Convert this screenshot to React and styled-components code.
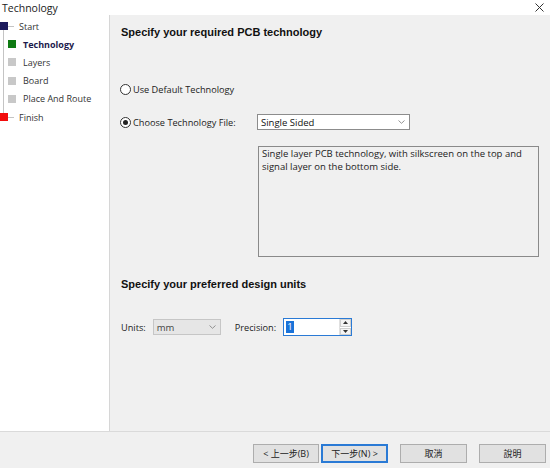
import styled, { createGlobalStyle } from "styled-components";

const GlobalStyle = createGlobalStyle`
  html, body {
    margin: 0;
    padding: 0;
    background: #ffffff;
  }
  body {
    font-family: "Open Sans", "Noto Sans", "Noto Sans CJK TC", sans-serif;
    color: #1a1a1a;
  }
`;

const steps = [
  { label: "Start", color: "#1c1a5c", level: 0, tick: true },
  { label: "Technology", color: "#0e7a12", level: 1, active: true },
  { label: "Layers", color: "#c8c8c8", level: 1 },
  { label: "Board", color: "#c8c8c8", level: 1 },
  { label: "Place And Route", color: "#c8c8c8", level: 1 },
  { label: "Finish", color: "#f20c0c", level: 0, tick: true },
];

const Window = styled.div`
  width: 550px;
  height: 468px;
  display: flex;
  flex-direction: column;
  overflow: hidden;
  background: #f0f0f0;
`;

const TitleBar = styled.div`
  height: 15px;
  flex: none;
  background: #ffffff;
  display: flex;
  align-items: center;
  justify-content: space-between;
  padding: 0 6px 0 2px;
  font-size: 10.5px;
  color: #222;
`;

const Body = styled.div`
  flex: 1;
  display: flex;
  min-height: 0;
`;

const Sidebar = styled.div`
  width: 109px;
  flex: none;
  background: #ffffff;
  border-right: 1px solid #d6d6d6;
  padding-top: 2px;
`;

const Tree = styled.ul`
  position: relative;
  list-style: none;
  margin: 0;
  padding: 0;

  &::before {
    content: "";
    position: absolute;
    left: 3px;
    top: 12px;
    height: 92px;
    border-left: 1px solid #c4c4c4;
  }
`;

const Step = styled.li`
  position: relative;
  height: 18.2px;
  display: flex;
  align-items: center;
  padding-left: ${({ $level }) => ($level ? 8 : 0)}px;
  font-size: 9px;
  font-weight: ${({ $active }) => ($active ? 700 : 400)};
  color: ${({ $active }) => ($active ? "#1c1a4c" : "#333")};
`;

const Box = styled.span`
  width: 8px;
  height: 8px;
  flex: none;
  margin-right: ${({ $gap }) => $gap}px;
  background: ${({ $color }) => $color};
`;

const Tick = styled.span`
  width: 6px;
  height: 1px;
  margin-right: 5px;
  flex: none;
  background: #c4c4c4;
`;

const Main = styled.div`
  flex: 1;
  padding: 10px 0 0 11px;
  display: flex;
  flex-direction: column;
`;

const Heading = styled.div`
  font-family: "Liberation Sans", Arial, sans-serif;
  font-weight: 700;
  font-size: 11px;
  color: #111;
  height: 14px;
  line-height: 14px;
  margin-top: ${({ $top }) => $top}px;
`;

const Row = styled.div`
  display: flex;
  align-items: center;
  height: 16px;
  margin-top: ${({ $top }) => $top}px;
  font-size: 9.2px;
  color: #222;
`;

const RadioLabel = styled.label`
  display: flex;
  align-items: center;
  gap: 2px;
  width: 137px;
  margin-left: -1px;
`;

const RadioDot = styled.span`
  width: 9px;
  height: 9px;
  border-radius: 50%;
  border: 1px solid #333;
  background: #fff;
  display: flex;
  align-items: center;
  justify-content: center;

  &::after {
    content: "";
    width: 5px;
    height: 5px;
    border-radius: 50%;
    background: ${({ $checked }) => ($checked ? "#222" : "transparent")};
  }
`;

const Select = styled.div`
  width: ${({ $w }) => $w}px;
  height: 16px;
  box-sizing: border-box;
  border: 1px solid ${({ $disabled }) => ($disabled ? "#c6c6c6" : "#8c8c8c")};
  background: ${({ $disabled }) => ($disabled ? "#e6e6e6" : "#ffffff")};
  color: ${({ $disabled }) => ($disabled ? "#444" : "#111")};
  display: flex;
  align-items: center;
  justify-content: space-between;
  padding: 0 4px 0 3px;
  font-size: 9.5px;
`;

const Chevron = () => (
  <svg width="7" height="4" viewBox="0 0 7 4">
    <path d="M0.5 0.5 L3.5 3.3 L6.5 0.5" fill="none" stroke="#888" strokeWidth="0.9" />
  </svg>
);

const Description = styled.div`
  margin: 16px 0 0 137px;
  width: 281px;
  height: 111px;
  box-sizing: border-box;
  border: 1px solid #8a8a8a;
  padding: 1px 3px;
  font-size: 9.5px;
  line-height: 12.5px;
  color: #222;
`;

const Label = styled.span`
  margin-left: ${({ $left }) => $left || 0}px;
  margin-right: ${({ $gap }) => $gap}px;
`;

const Spin = styled.div`
  width: 69px;
  height: 18px;
  box-sizing: border-box;
  border: 1px solid #2a7ad5;
  background: #fff;
  display: flex;
  align-items: stretch;
`;

const SpinText = styled.div`
  flex: 1;
  display: flex;
  align-items: center;
  padding-left: 2px;

  span {
    background: #1a73d9;
    color: #fff;
    font-size: 9.5px;
    line-height: 12px;
    padding: 0 1px;
  }
`;

const SpinButtons = styled.div`
  width: 11px;
  display: flex;
  flex-direction: column;
  border-left: 1px solid #e0e0e0;
`;

const SpinButton = styled.div`
  flex: 1;
  display: flex;
  align-items: center;
  justify-content: center;
  background: #f4f4f4;
  border: 1px solid #d0d0d0;
  margin-top: ${({ $up }) => ($up ? 0 : 1)}px;
`;

const Footer = styled.div`
  height: 37px;
  flex: none;
  border-top: 1px solid #dadada;
  background: #f0f0f0;
  display: flex;
  align-items: center;
  justify-content: flex-end;
  padding: 6px 4px 0 0;
  box-sizing: border-box;
`;

const Button = styled.button`
  width: ${({ $w }) => $w || 67}px;
  height: 19px;
  margin-left: ${({ $gap }) => $gap}px;
  padding: 0;
  box-sizing: border-box;
  border: 1px solid ${({ $primary }) => ($primary ? "#2a7ad5" : "#adadad")};
  box-shadow: ${({ $primary }) => ($primary ? "inset 0 0 0 1px #2a7ad5" : "none")};
  background: #e1e1e1;
  font-family: "Open Sans", "Noto Sans CJK TC", sans-serif;
  font-size: 9px;
  color: #222;
`;

const Triangle = ({ up }) => (
  <svg width="5" height="3" viewBox="0 0 5 3">
    <path d={up ? "M0 3 L2.5 0 L5 3 Z" : "M0 0 L2.5 3 L5 0 Z"} fill="#333" />
  </svg>
);

export default function App() {
  return (
    <Window>
      <GlobalStyle />
      <TitleBar>
        <span>Technology</span>
        <svg width="9" height="9" viewBox="0 0 9 9">
          <path d="M0.5 0.5 L8.5 8.5 M8.5 0.5 L0.5 8.5" stroke="#333" strokeWidth="1" />
        </svg>
      </TitleBar>
      <Body>
        <Sidebar>
          <Tree>
            {steps.map((s) => (
              <Step key={s.label} $level={s.level} $active={s.active}>
                <Box $color={s.color} $gap={s.tick ? 0 : 7} />
                {s.tick && <Tick />}
                {s.label}
              </Step>
            ))}
          </Tree>
        </Sidebar>
        <Main>
          <Heading $top={0}>Specify your required PCB technology</Heading>
          <Row $top={42}>
            <RadioLabel>
              <RadioDot />
              Use Default Technology
            </RadioLabel>
          </Row>
          <Row $top={17}>
            <RadioLabel>
              <RadioDot $checked />
              Choose Technology File:
            </RadioLabel>
            <Select $w={153}>
              Single Sided
              <Chevron />
            </Select>
          </Row>
          <Description>
            Single layer PCB technology, with silkscreen on the top and signal layer on the bottom side.
          </Description>
          <Heading $top={20}>Specify your preferred design units</Heading>
          <Row $top={28}>
            <Label $gap={7}>Units:</Label>
            <Select $w={68} $disabled>
              mm
              <Chevron />
            </Select>
            <Label $left={14} $gap={7}>Precision:</Label>
            <Spin>
              <SpinText>
                <span>1</span>
              </SpinText>
              <SpinButtons>
                <SpinButton $up>
                  <Triangle up />
                </SpinButton>
                <SpinButton>
                  <Triangle />
                </SpinButton>
              </SpinButtons>
            </Spin>
          </Row>
        </Main>
      </Body>
      <Footer>
        <Button $gap={0} $w={66}>&lt; 上一步(B)</Button>
        <Button $gap={2} $primary>下一步(N) &gt;</Button>
        <Button $gap={12}>取消</Button>
        <Button $gap={12}>說明</Button>
      </Footer>
    </Window>
  );
}
